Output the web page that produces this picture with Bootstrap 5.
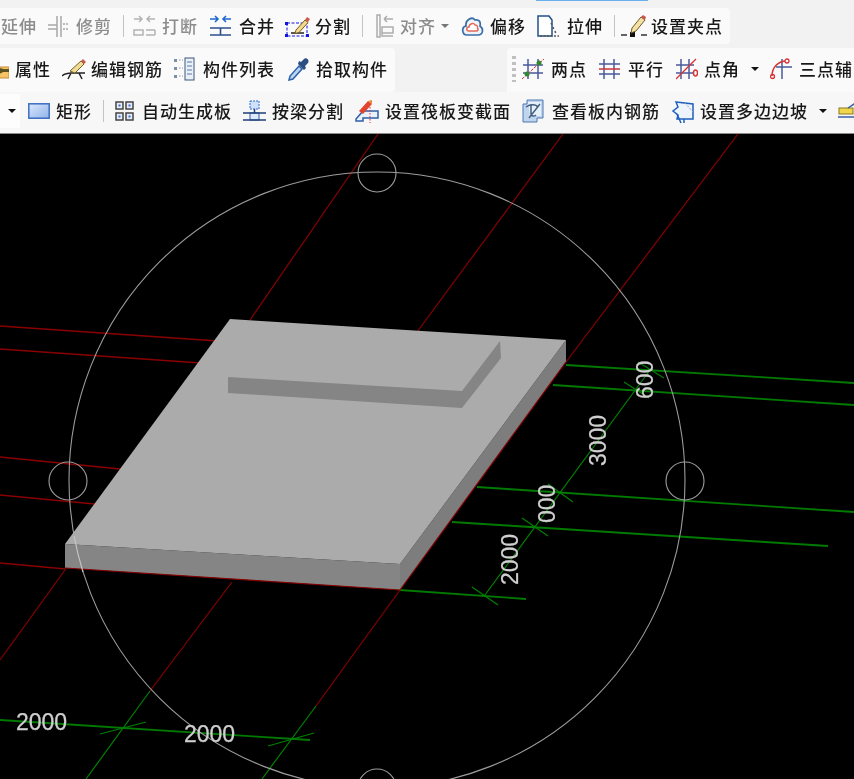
<!doctype html>
<html lang="zh">
<head>
<meta charset="utf-8">
<title>钢筋算量</title>
<link href="https://cdn.jsdelivr.net/npm/bootstrap@5.3.0/dist/css/bootstrap.min.css" rel="stylesheet">
<style>
html,body{margin:0;height:779px;overflow:hidden;background:#000}
.shell{width:854px;height:779px;overflow:hidden;background:#f2f2f2}
.bars{height:134px;background:#f2f2f2;filter:blur(.4px)}
.bar-line{white-space:nowrap;overflow:hidden}
.sky-edge{height:1px;width:112px;margin-left:536px;background:#6ab0ee;flex:none}
.line-a{height:47px;padding-top:7px}
.line-b{height:44px}
.line-c{height:42px;background:#f7f7f7;border-bottom:1px solid #8a8a8a}
.tray{height:100%;background:#fafafa;gap:11px;padding-right:7px;padding-left:1px;flex:none;border-radius:0 4px 4px 0}
.line-a .tray{height:36px}
.line-b .tray{padding-bottom:3px}
.line-c .tray{padding-bottom:3px;padding-left:0}
.tray-end{margin-left:auto;border-radius:4px 0 0 0;padding-left:5px;gap:11px;width:347px;overflow:hidden;padding-right:0}
.tray-wide{background:none;padding-right:0;width:854px;overflow:hidden}
.tool{gap:6px;flex:none;font:500 17px/20px "Noto Sans CJK SC","Liberation Sans",sans-serif;letter-spacing:1px;color:#181818}
.tool svg,.tray svg{flex:none;display:block}
.off{color:#8c8c8c}
.rule{width:1px;height:22px;background:#c4c4c4;flex:none}
.caret-mark{width:0;height:0;border-left:4px solid transparent;border-right:4px solid transparent;border-top:4px solid #111;flex:none}
.caret-off{border-top-color:#777;margin-left:-6px}
.stub{background:#fdfdfd;width:20px;height:34px;flex:none;margin-right:-3px}
.stub .caret-mark{margin-left:8px}
.grip{width:4px;height:26px;flex:none;background:repeating-linear-gradient(#c0c0c0 0 3px,transparent 3px 6px);margin-right:-5px}
.wide-7{gap:7px}.wide-8{gap:8px}.tight-5{gap:5px}.tight-4{gap:4px}
.nudge-l1{margin-left:-1px}.nudge-r2{margin-left:2px}.nudge-r1{margin-left:1px}.nudge-l2{margin-left:-2px}.nudge-l5{margin-left:-5px}
.cut{width:37px;overflow:hidden;flex:none}
.cad{display:block;width:854px;height:645px;background:#000;filter:blur(.3px)}
.dim{font:400 23px "Liberation Sans",sans-serif;fill:#cfcfcf;stroke:#cfcfcf;stroke-width:.25}
</style>
</head>
<body>
<div class="shell d-flex flex-column">
  <div class="bars d-flex flex-column">
    <div class="sky-edge"></div>
    <div class="bar-line line-a d-flex">
      <div class="tray d-flex align-items-center">
        <div class="tool d-flex align-items-center off"><span>延伸</span></div>
        <div class="tool d-flex align-items-center off wide-8">
          <svg width="20" height="24" viewBox="0 0 20 24" fill="none" stroke="#a8a8a8" stroke-width="1.5"><path d="M0 11h9M0 15h9M9 2v21M13 2v21M15 10h2M15 15h2M18 10h2M18 15h2"/></svg><span>修剪</span></div>
        <div class="rule"></div>
        <div class="tool d-flex align-items-center off nudge-l2">
          <svg width="23" height="22" viewBox="0 0 23 22" fill="none" stroke="#b4b4b4" stroke-width="1.5"><path d="M1 4h8M6 1l3 3-3 3M22 4h-8M17 1l-3 3 3 3M1 15h9v5H1zM13 15h9M13 20h9M22 15v5"/></svg><span>打断</span></div>
        <div class="tool d-flex align-items-center wide-7">
          <svg width="23" height="22" viewBox="0 0 23 22" fill="none" stroke="#2d4f8e" stroke-width="1.6"><path d="M1 4h8M6 1l3 3-3 3" stroke="#1f6ad0"/><path d="M22 4h-8M17 1l-3 3 3 3" stroke="#1f6ad0"/><path d="M1 13h21M1 20h21M11.500 13v7"/></svg><span>合并</span></div>
        <div class="tool d-flex align-items-center tight-5 nudge-l1">
          <svg width="25" height="24" viewBox="0 0 25 24" fill="none"><path d="M2 9h20v13H2z" stroke="#1414e0" stroke-dasharray="3 1.500"/><path d="M6 19h13" stroke="#222" stroke-width="1.500"/><path d="M11 16l9-10 3 2.500-9 10-4 1z" fill="#f2dc8c" stroke="#7b5a20"/><path d="M20 6l2-3 3 2-2 3z" fill="#d05a4a"/><rect x="0" y="20" width="3" height="3" fill="#1414e0"/><rect x="21" y="20" width="3" height="3" fill="#1414e0"/><rect x="0" y="8" width="3" height="3" fill="#1414e0"/></svg><span>分割</span></div>
        <div class="rule"></div>
        <div class="tool d-flex align-items-center off nudge-r2">
          <svg width="18" height="24" viewBox="0 0 18 24" fill="none" stroke="#adadad" stroke-width="1.500"><path d="M1 1v22h3V1zM8 5h9M8 5l3-3M8 5l3 3M6 13h11v6H6zM6 19v3h11"/></svg><span>对齐</span></div>
        <div class="caret-mark caret-off"></div>
        <div class="tool d-flex align-items-center nudge-r1">
          <svg width="23" height="20" viewBox="0 0 23 20" fill="none"><path d="M6 19C1 19 0 11 5 10 4 4 11 0 14 4c4-1 6 2 5 6 4 3 3 9-2 9z" stroke="#3b6fa8" stroke-width="1.700" fill="#eef4fa"/><path d="M8 15c-3 0-3-4 0-4 0-3 5-5 6-2 3 0 3 3 2 3 2 1 1 3-1 3z" stroke="#e2695a" stroke-width="1.500" fill="#fff"/></svg><span>偏移</span></div>
        <div class="tool d-flex align-items-center wide-7">
          <svg width="23" height="22" viewBox="0 0 23 22" fill="none"><path d="M1 21V1h11l3 4v16z" stroke="#23508a" stroke-width="1.500" fill="#fff"/><path d="M14 8l1.500 3M16 12l1 3M18 16l1 3M3 21h19" stroke="#555" stroke-width="1.500" stroke-dasharray="2 1.500"/></svg><span>拉伸</span></div>
        <div class="rule"></div>
        <div class="tool d-flex align-items-center tight-4 nudge-l5">
          <svg width="26" height="24" viewBox="0 0 26 24" fill="none"><path d="M0 21h6M20 21h6" stroke="#333" stroke-width="1.500"/><rect x="9" y="18" width="5" height="5" fill="#111"/><path d="M11 14l9-11 4 3-9 11-5 2z" fill="#f3e2a4" stroke="#6e5a2a"/><path d="M20 3l2-2 3 2-1 3z" fill="#c9544a"/></svg><span>设置夹点</span></div>
      </div>
    </div>
    <div class="bar-line line-b d-flex">
      <div class="tray d-flex align-items-center">
        <div class="tool d-flex align-items-center tight-5 nudge-l1">
          <svg width="9" height="20" viewBox="13 0 9 20"><path d="M1 6h8l3 2h10v11H1z" fill="#f5c565" stroke="#c8893a"/><path d="M10 13c0-3 4-5 6-3h6v3H16c-2 2-6 2-6 0z" fill="#5c5220"/></svg><span class="nudge-r1">属性</span></div>
        <div class="tool d-flex align-items-center tight-4">
          <svg width="25" height="22" viewBox="0 0 25 22" fill="none"><path d="M0 18c3-3 7-3 10-3M8 15h15M6 21l3-6M20 21l-3-6" stroke="#222" stroke-width="1.500"/><path d="M8 13L19 3l3 3-9 9z" fill="#f0dc94" stroke="#7a6125"/><path d="M19 3l2-2 3 3-2 2z" fill="#c75b4c"/></svg><span>编辑钢筋</span></div>
        <div class="tool d-flex align-items-center wide-8">
          <svg width="21" height="24" viewBox="0 0 21 24" fill="none"><path d="M0 2h3v3H0zM0 10h3v3H0zM0 18h3v3H0z" fill="#7d8ea6"/><path d="M5 3h4M5 11h4M5 19h4" stroke="#8894a8" stroke-dasharray="1.500 1.500"/><rect x="11" y="1" width="9" height="22" fill="#e9f0f8" stroke="#3f5676"/><path d="M13 5h5M13 9h5M13 13h5M13 17h5" stroke="#5d7ba3"/></svg><span>构件列表</span></div>
        <div class="tool d-flex align-items-center nudge-r2">
          <svg width="22" height="24" viewBox="0 0 22 24"><path d="M1 23l1-4L11 9l3 3-9 10z" fill="#bcd3f0" stroke="#2d62ad" stroke-width="1.500"/><path d="M10 7l6 6 2-2-1-2 3-3c2-3-2-6-4-4l-3 3-2-1z" fill="#2b4f80"/></svg><span>拾取构件</span></div>
      </div>
      <div class="tray tray-end d-flex align-items-center">
        <div class="grip"></div>
        <div class="tool d-flex align-items-center">
          <svg width="23" height="22" viewBox="0 0 23 22" fill="none"><path d="M6 1v20M16 1v20M1 7h20M1 15h20" stroke="#4a5a9c" stroke-width="1.500"/><path d="M0 21L22 1" stroke="#d83434" stroke-dasharray="3 1"/><circle cx="5" cy="16" r="2.500" fill="#2f8a2f"/><circle cx="17" cy="5" r="2.500" fill="#2f8a2f"/></svg><span>两点</span></div>
        <div class="tool d-flex align-items-center wide-8 nudge-r1">
          <svg width="21" height="22" viewBox="0 0 21 22" fill="none"><path d="M5 1v20M15 1v20M0 6h21M0 16h21" stroke="#4a5a9c" stroke-width="1.500"/><path d="M0 11h21" stroke="#c7343a" stroke-width="1.500"/></svg><span>平行</span></div>
        <div class="tool d-flex align-items-center nudge-r1">
          <svg width="22" height="22" viewBox="0 0 22 22" fill="none"><path d="M5 1v20M13 1v20M0 7h18M0 15h18" stroke="#4a5a9c" stroke-width="1.500"/><path d="M0 21L20 1" stroke="#d83434" stroke-width="1.300"/><ellipse cx="19.500" cy="15" rx="2" ry="3" stroke="#d83434" stroke-width="1.500"/></svg><span>点角</span></div>
        <div class="caret-mark"></div>
        <div class="tool d-flex align-items-center wide-7">
          <svg width="22" height="22" viewBox="0 0 22 22" fill="none"><path d="M12 1v20M6 9h16" stroke="#4a5a9c" stroke-width="1.500"/><path d="M2 18C2 9 8 4 15 3" stroke="#d83434" stroke-width="1.500"/><circle cx="2.500" cy="18.500" r="2" stroke="#d83434" stroke-width="1.300"/><circle cx="17" cy="3" r="2" stroke="#d83434" stroke-width="1.300"/></svg><span>三点辅</span></div>
      </div>
    </div>
    <div class="bar-line line-c d-flex">
      <div class="tray tray-wide d-flex align-items-center">
        <div class="stub d-flex align-items-center"><div class="caret-mark"></div></div>
        <div class="tool d-flex align-items-center">
          <svg width="22" height="16" viewBox="0 0 22 16"><defs><linearGradient id="rectFill" x1="0" y1="0" x2="1" y2="1"><stop offset="0" stop-color="#dce8fb"/><stop offset="1" stop-color="#8fb2ea"/></linearGradient></defs><rect x=".8" y=".8" width="20.400" height="14.400" fill="url(#rectFill)" stroke="#3b6cc4" stroke-width="1.500"/></svg><span>矩形</span></div>
        <div class="rule"></div>
        <div class="tool d-flex align-items-center wide-8">
          <svg width="19" height="20" viewBox="0 0 19 20"><g fill="#e8eef9" stroke="#444" stroke-width="1.500"><rect x="1" y="1" width="7" height="7"/><rect x="11" y="1" width="7" height="7"/><rect x="1" y="12" width="7" height="7"/><rect x="11" y="12" width="7" height="7"/></g><g fill="#3a6bd0"><rect x="3.500" y="3.500" width="2" height="2"/><rect x="13.500" y="3.500" width="2" height="2"/><rect x="3.500" y="14.500" width="2" height="2"/><rect x="13.500" y="14.500" width="2" height="2"/></g></svg><span>自动生成板</span></div>
        <div class="tool d-flex align-items-center">
          <svg width="23" height="24" viewBox="0 0 23 24" fill="none"><rect x="7" y="2" width="9" height="8" fill="#cfe0f8" stroke="#2f6bd0" stroke-dasharray="2 1"/><rect x="7" y="14" width="9" height="7" fill="#dce9fb" stroke="#2f5fa8"/><path d="M0 14h23M0 21h23M11.500 10v4" stroke="#1f3f78" stroke-width="1.500"/></svg><span>按梁分割</span></div>
        <div class="tool d-flex align-items-center">
          <svg width="24" height="24" viewBox="0 0 24 24" fill="none"><path d="M1 20l7-8h15v7H8v3H1z" fill="#eaf1fb" stroke="#2f5fa8" stroke-width="1.500"/><path d="M4 12l9-10 4 3-9 10z" fill="#e2442f"/><path d="M13 2l4-1 0 4z" fill="#ea8a3a"/><path d="M15 8v16" stroke="#e0323a" stroke-dasharray="1.500 1.500"/></svg><span>设置筏板变截面</span></div>
        <div class="tool d-flex align-items-center wide-8">
          <svg width="22" height="24" viewBox="0 0 22 24" fill="none"><path d="M1 5h4V1h16v18H15v4H1z" fill="#bfd4ee" stroke="#4c79b0"/><path d="M6 3h13v14H8z" fill="#e6f0fb"/><path d="M4 8c4-3 10-3 12 0M9 5v10c0 2 3 3 5 1M18 5L7 19" stroke="#44607f" stroke-width="1.500"/></svg><span>查看板内钢筋</span></div>
        <div class="tool d-flex align-items-center">
          <svg width="23" height="25" viewBox="0 0 23 25" fill="none"><path d="M5 3l17 2v15H6l1-4-5-4 5-4z" fill="#eef4fc" stroke="#1e5fc0" stroke-width="1.500"/><path d="M14 4l8 9" stroke="#999" stroke-dasharray="2 1.500"/><path d="M6 15l4 9M13 20v4" stroke="#1e5fc0" stroke-width="1.500"/></svg><span>设置多边边坡</span></div>
        <div class="caret-mark"></div>
        <div class="cut">
          <svg width="18" height="20" viewBox="0 0 18 20"><rect x="1" y="7" width="14" height="6" fill="#f1d64c" stroke="#8a7a20"/><path d="M0 16h18M10 7l6-4h2" stroke="#3a5fa8" stroke-width="1.500" fill="none"/></svg>
        </div>
      </div>
    </div>
  </div>
  <svg class="cad" viewBox="0 134 854 645" fill="none" role="img" aria-label="三维筏板视图">
    <g stroke="#8a0000" stroke-width="1.700">
      <path d="M0 326L232 342M0 349L215 364M0 457L130 470M0 495L105 505M0 563L66 569"/>
    </g>
    <g stroke="#860000" stroke-width="1.200">
      <path d="M250 320L378 134M417 332L563 134M566 362L738 134M65 570L0 660M232 582L150 691M400 590L316 706"/>
    </g>
    <g stroke="#007a00" stroke-width="1.800">
      <path d="M566 365L854 383M553 385L854 405M477 487L854 512M452 522L828 546M400 590L526 599M0 720L310 740"/>
    </g>
    <g stroke="#008000" stroke-width="1.200">
      <path d="M150 691L86 779M316 706L262 779"/>
      <path d="M485 595L650 370"/>
      <path d="M472 587L498 605M522 518L548 536M548 484L573 502M624 382L649 398M638 362L664 378M100 734L146 722M268 746L314 733"/>
    </g>
    <g stroke="#9c9c9c" stroke-width="1.100">
      <circle cx="377" cy="480" r="308"/>
      <circle cx="377" cy="173" r="19"/>
      <circle cx="68" cy="481" r="19"/>
      <circle cx="685" cy="481" r="19"/>
      <circle cx="377" cy="788" r="19"/>
    </g>
    <path d="M65 544L400 564L400 590L65 568Z" fill="#858585"/>
    <path d="M400 564L566 340L566 362L400 590Z" fill="#7d7d7d"/>
    <path d="M230 319L566 340L400 564L65 544Z" fill="#ababab"/>
    <path d="M228 377L462 391V408L228 393Z" fill="#858585"/>
    <path d="M462 391L500 341L501 358L462 408Z" fill="#858585"/>
    <path d="M400 590L566 362M65 568L400 590" stroke="#860000" stroke-width="1.200"/>
    <path d="M74.100 536A308 308 0 0 0 83 572" stroke="#c8c8c8" stroke-width="1.100"/>
    <text class="dim" transform="translate(518 585) rotate(-90)">2000</text>
    <text class="dim" transform="translate(555 523) rotate(-90)">000</text>
    <text class="dim" transform="translate(606 466) rotate(-90)">3000</text>
    <text class="dim" transform="translate(653 399) rotate(-90)">600</text>
    <text class="dim" x="16" y="730">2000</text>
    <text class="dim" x="184" y="742">2000</text>
  </svg>
</div>
<script src="https://cdn.jsdelivr.net/npm/bootstrap@5.3.0/dist/js/bootstrap.bundle.min.js"></script>
</body>
</html>
